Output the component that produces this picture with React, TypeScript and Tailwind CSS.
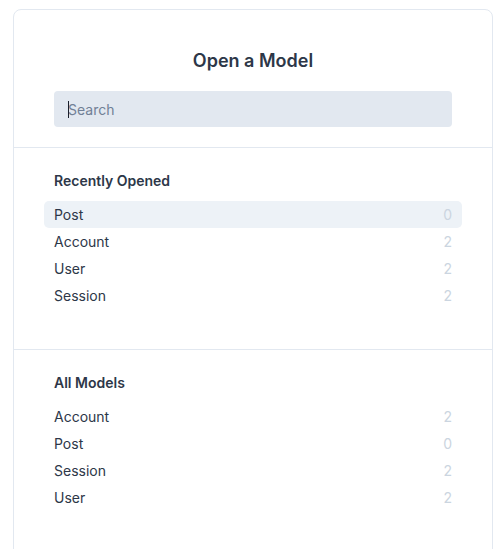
const recent = [
  { name: "Post", count: 0 },
  { name: "Account", count: 2 },
  { name: "User", count: 2 },
  { name: "Session", count: 2 },
];

const all = [
  { name: "Account", count: 2 },
  { name: "Post", count: 0 },
  { name: "Session", count: 2 },
  { name: "User", count: 2 },
];

function Section({ title, items, active }: { title: string; items: { name: string; count: number }[]; active?: number }) {
  return (
    <div className="px-10 pt-[23px] pb-[40px] border-b border-[#e2e8f0] last:border-b-0">
      <h3 className="text-sm leading-5 font-semibold text-[#2d3748]">{title}</h3>
      <ul className="mt-[10px] -mx-2.5">
        {items.map((item, i) => (
          <li
            key={item.name}
            className={`flex justify-between items-center h-[27px] pt-px px-2.5 rounded-[5px] text-sm text-[#2d3748] ${
              i === active ? "bg-[#edf2f7]" : ""
            }`}
          >
            <span>{item.name}</span>
            <span className="text-[#cbd5e0]">{item.count}</span>
          </li>
        ))}
      </ul>
    </div>
  );
}

export default function App() {
  return (
    <div className="min-h-[549px] bg-white pt-[9px] pl-[13px] font-['Inter',sans-serif]">
      <div className="w-[480px] min-h-[560px] border border-[#e2e8f0] rounded-t-lg bg-white">
        <div className="px-10 pt-[39px] pb-[20px] border-b border-[#e2e8f0]">
          <h2 className="text-center text-lg leading-6 font-semibold text-[#2d3748]">Open a Model</h2>
          <div className="relative mt-[18px]">
            <input
              placeholder="Search"
              className="w-full h-9 rounded bg-[#e2e8f0] px-[14px] text-sm text-[#2d3748] placeholder:text-[#718096] outline-none"
            />
            <span className="absolute left-[14px] top-[10px] w-px h-[17px] bg-[#1a202c]" />
          </div>
        </div>
        <Section title="Recently Opened" items={recent} active={0} />
        <Section title="All Models" items={all} />
      </div>
    </div>
  );
}
